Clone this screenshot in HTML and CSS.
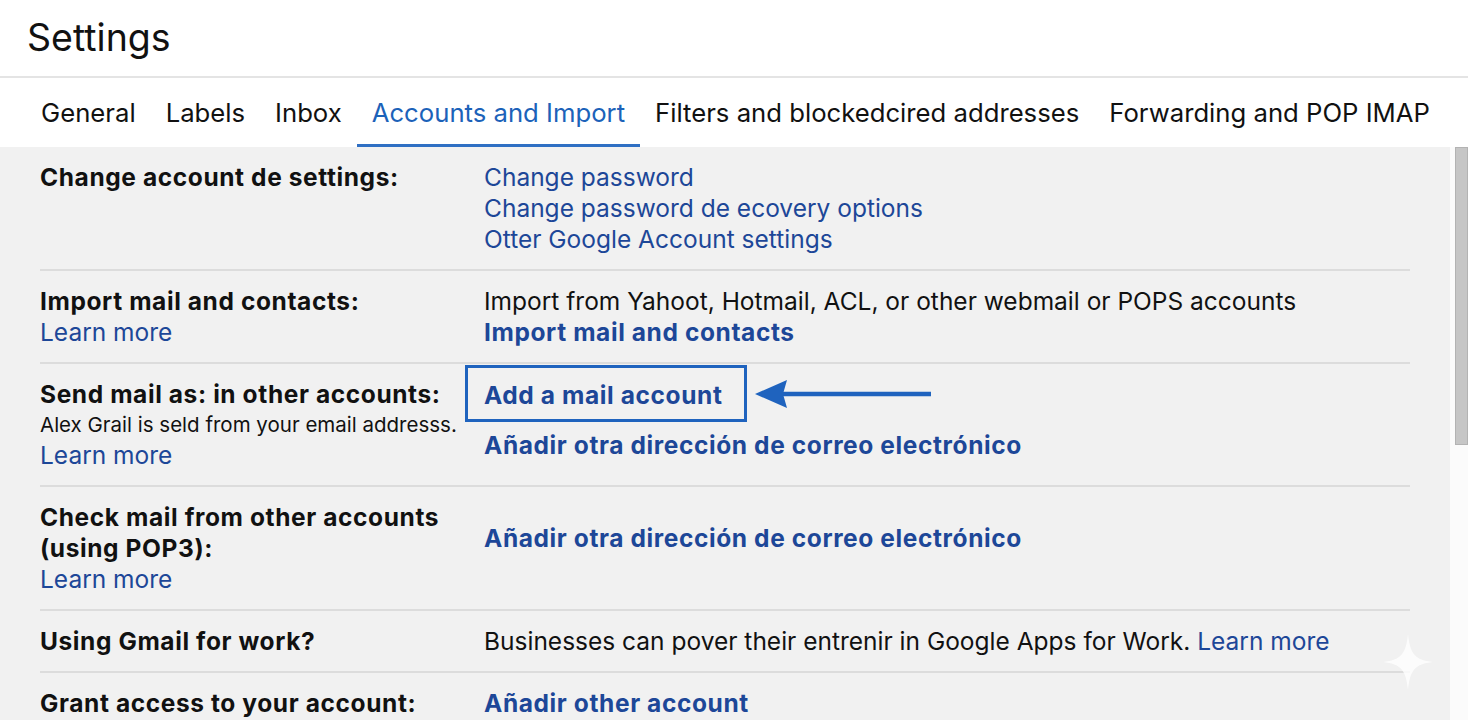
FILE: index.html
```html
<!DOCTYPE html>
<html lang="en">
<head>
  <meta charset="UTF-8">
  <meta name="viewport" content="width=device-width, initial-scale=1.0">
  <title>Settings</title>
  <link rel="stylesheet" href="styles.css">
</head>
<body>
  <div class="header">
    <h1>Settings</h1>
  </div>

  <!-- Tabs -->
  <div class="tabs">
    <span class="tab">General</span>
    <span class="tab">Labels</span>
    <span class="tab">Inbox</span>
    <span class="tab active">Accounts and Import</span>
    <span class="tab">Filters and blockedcired addresses</span>
    <span class="tab">Forwarding and POP IMAP</span>
  </div>

  <div class="main">
    <div class="content">
      <div class="row first">
        <div class="label"><strong>Change account de settings:</strong></div>
        <div class="value">
          <a href="#">Change password</a><br>
          <a href="#">Change password de ecovery options</a><br>
          <a href="#">Otter Google Account settings</a>
        </div>
      </div>

      <div class="row">
        <div class="label">
          <strong>Import mail and contacts:</strong><br>
          <a href="#">Learn more</a>
        </div>
        <div class="value">
          Import from Yahoot, Hotmail, ACL, or other webmail or POPS accounts<br>
          <a href="#" class="bold">Import mail and contacts</a>
        </div>
      </div>

      <div class="row">
        <div class="label">
          <strong>Send mail as: in other accounts:</strong>
          <div class="note">Alex Grail is seld from your email addresss.</div>
          <a href="#">Learn more</a>
        </div>
        <div class="value">
          <div class="callout">
            <a href="#" class="bold boxed">Add a mail account</a>
            <svg class="arrow" width="178" height="30" viewBox="0 0 178 30">
              <path d="M26 15 H176" stroke="#1f63be" stroke-width="4.5" fill="none"/>
              <path d="M0 15 L32 1 L28 15 L32 29 Z" fill="#1f63be"/>
            </svg>
          </div>
          <a href="#" class="bold spaced">Añadir otra dirección de correo electrónico</a>
        </div>
      </div>

      <div class="row">
        <div class="label">
          <strong>Check mail from other accounts<br>(using POP3):</strong><br>
          <a href="#">Learn more</a>
        </div>
        <div class="value">
          <a href="#" class="bold pop">Añadir otra dirección de correo electrónico</a>
        </div>
      </div>

      <div class="row">
        <div class="label"><strong>Using Gmail for work?</strong></div>
        <div class="value">
          Businesses can pover their entrenir in Google Apps for Work. <a href="#">Learn more</a>
        </div>
      </div>

      <div class="row">
        <div class="label"><strong>Grant access to your account:</strong></div>
        <div class="value">
          <a href="#" class="bold">Añadir other account</a>
        </div>
      </div>

      <svg class="sparkle" width="50" height="56" viewBox="0 0 50 56">
        <path d="M25 0 C27 20 32 26 50 28 C32 30 27 36 25 56 C23 36 18 30 0 28 C18 26 23 20 25 0 Z" fill="#ffffff" opacity="0.8"/>
      </svg>
    </div>

    <div class="scrollbar"><div class="thumb"></div></div>
  </div>
</body>
</html>
```

FILE: styles.css
```css
body {
  margin: 0;
  font-family: Inter, Roboto, Arial, sans-serif;
  background: #ffffff;
  color: #111;
  overflow: hidden;
  height: 720px;
}
a {
  color: #1d4798;
  text-decoration: none;
}
.bold,
strong {
  font-weight: 700;
  letter-spacing: 0.6px;
}

.header {
  height: 76px;
  border-bottom: 2px solid #e4e4e4;
}
.header h1 {
  margin: 0;
  padding: 14px 0 0 27px;
  font-size: 37.5px;
  font-weight: 400;
  line-height: 48px;
}

.tabs {
  display: flex;
  gap: 30px;
  height: 69px;
  padding-left: 41px;
  font-size: 25.7px;
}
.tab {
  line-height: 68px;
  padding-top: 1px;
}
.tab.active {
  color: #1c62b9;
  border-bottom: 3px solid #2f6fc3;
  padding: 1px 15px 0;
  margin: 0 -15px;
}

.main {
  display: flex;
  height: 573px;
}
.content {
  position: relative;
  flex: 1;
  background: #f1f1f1;
  padding: 0 40px 0 40px;
  font-size: 24.5px;
  line-height: 31px;
}
.scrollbar {
  width: 18px;
  background: #fbfbfb;
}
.thumb {
  margin-left: 5px;
  height: 296px;
  background: #c6c6c6;
  border: 1px solid #b3b3b3;
}

.row {
  display: grid;
  grid-template-columns: 444px 1fr;
  padding: 15px 0 14px;
  border-top: 2px solid #dcdcdc;
}
.row.first {
  border-top: none;
  padding-top: 15px;
}
.note {
  font-size: 20.5px;
  line-height: 30px;
}
.callout {
  display: flex;
  align-items: center;
  gap: 8px;
  margin-top: -14px;
  margin-left: -19px;
}
.boxed {
  display: inline-block;
  padding: 12px 22px 8px 16px;
  border: 3px solid #1f63be;
}
.spaced {
  display: inline-block;
  margin-top: 8px;
}
.pop {
  display: inline-block;
  margin-top: 21px;
}
.sparkle {
  position: absolute;
  right: 17px;
  bottom: 30px;
}
```
